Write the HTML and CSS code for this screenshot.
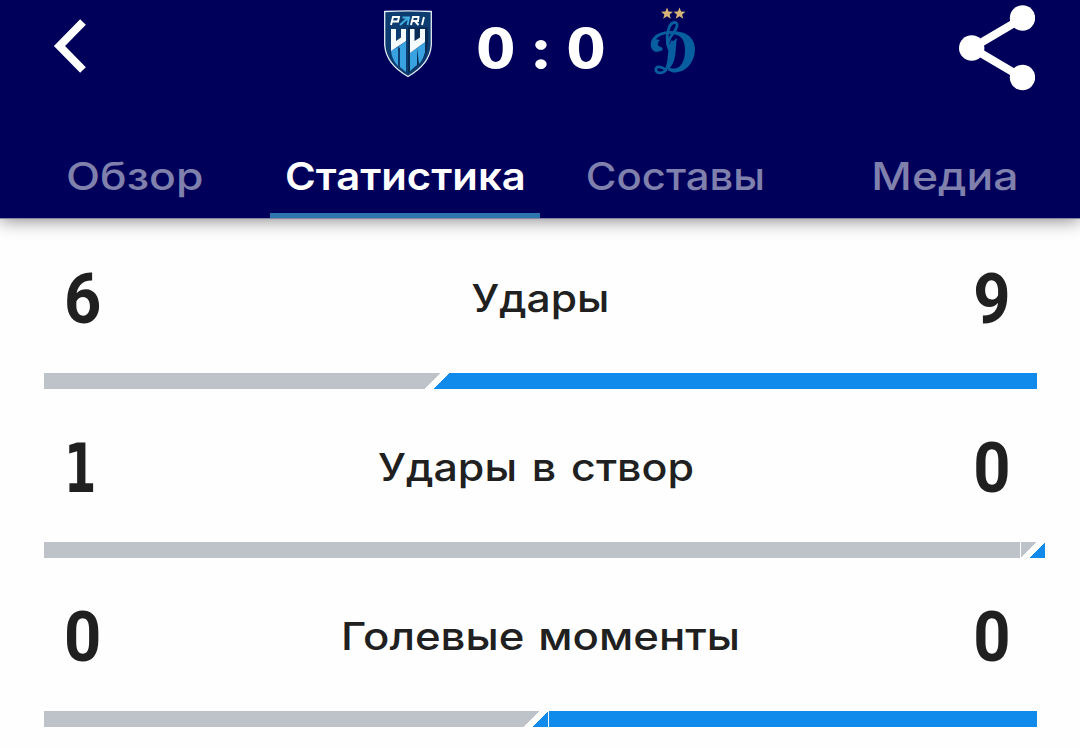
FILE: index.html
```html
<!DOCTYPE html>
<html lang="ru">
<head>
  <meta charset="UTF-8">
  <meta name="viewport" content="width=device-width, initial-scale=1.0">
  <title>Статистика матча</title>
  <link rel="stylesheet" href="styles.css">
</head>
<body>
  <header class="header">
    <div class="top-bar">
      <button class="icon-button" aria-label="Назад">
        <svg class="back-icon" width="36" height="56" viewBox="0 0 36 56">
          <path d="M30 4 L6.500 28 L30 52" fill="none" stroke="#fff" stroke-width="8"/>
        </svg>
      </button>
      <div class="score-board">
        <svg class="team-logo" width="48" height="68" viewBox="0 0 48 68">
          <path d="M.7 1.500 Q24 .2 47.300 1.500 V35 Q46 54 24 66.500 Q2 54 .7 35 Z" fill="#0d3d70" stroke="#e4edf5" stroke-width="1.300"/>
          <path d="M24 17 H44 V35 Q42 52 24 63 Z" fill="#092c56"/>
          <path d="M7 41 L14 37 V56 Q8 50 7 41 Z M14 37 L22 31 V62 L16 57 V38 Z M26 43 L33 38 V55 L26 61 Z M33 38 L41 32 V42 Q39 50 35 54 Z" fill="#39a2e0"/>
          <path d="M7 19 H12 V31 L17 27.500 V19 H22 V31 L7 41 Z M26 19 H30.500 V31 L36 27.500 V19 H41 V32 L26 43 Z" fill="#f5fafc"/>
          <g fill="none" stroke-width="1.900">
            <path d="M7 15 L9 7 H15 L14 11.500 H8.500 M27 15 L29 7 H34.500 L34 11 H28.500 M31 11 L34.500 15 M38 15 L40 7" stroke="#fff"/>
            <path d="M16 15 L25 7 M18.500 7.500 H25 L23.500 15" stroke="#43b0e4"/>
          </g>
        </svg>
        <div class="score">0&nbsp;:&nbsp;0</div>
        <svg class="team-logo" width="46" height="68" viewBox="0 0 46 68">
          <path id="star" d="M17 -2.500 L18.600 1.600 L23 1.800 L19.600 4.500 L20.800 8.700 L17 6.300 L13.200 8.700 L14.400 4.500 L11 1.800 L15.400 1.600 Z" fill="#d6b577"/>
          <use href="#star" x="12.500"/>
          <g fill="none" stroke="#085f9f" stroke-linecap="round">
            <path d="M11 39 C3 43 0 35 4.500 28.500 C10 22 20 22 27 23" stroke-width="3.200"/>
            <path d="M16 60 C11 56 6 56 6 59 C5 64 13 64 16 60" stroke-width="2.800"/>
            <path d="M19 39 C16 32 17 23 19 18 C21 11 28 11 27 16 C25 24 18 26 18 35 C19 38 21 36 22 32" stroke-width="2.800"/>
          </g>
          <path d="M26 21.500 C38 22 45 29 45 40 C44 54 35 63 23 62.500 L17 60 L20 58 C31 61 35 51 35 40 C35 31 32 26 25 24.500 Z M22 32 L27 28 C25 40 27 51 19 59 L15 59 C19 50 17 41 20 34 Z M10 30 C7 33 7 36 11 37 C13 38 13 40 10 41 C3 42 1 34 5 29 Z" fill="#085f9f"/>
        </svg>
      </div>
      <button class="icon-button" aria-label="Поделиться">
        <svg class="share-icon" width="76" height="86" viewBox="0 0 76 86">
          <path d="M64 13 L13 43 L64 73" fill="none" stroke="#fff" stroke-width="8"/>
          <circle cx="63.500" cy="13" r="12.700" fill="#fff"/>
          <circle cx="12.700" cy="43" r="12.700" fill="#fff"/>
          <circle cx="63.500" cy="72.500" r="12.700" fill="#fff"/>
        </svg>
      </button>
    </div>
    <nav class="tabs">
      <a class="tab"><span class="tab-text wide">Обзор</span></a>
      <a class="tab active"><span class="tab-text">Статистика</span></a>
      <a class="tab"><span class="tab-text">Составы</span></a>
      <a class="tab"><span class="tab-text wide">Медиа</span></a>
    </nav>
  </header>

  <main class="stats">
    <section class="stat">
      <div class="stat-row">
        <span class="value">6</span>
        <span class="label">Удары</span>
        <span class="value right">9</span>
      </div>
      <div class="bar">
        <div class="home" style="width: 381px"></div>
        <div class="slash"></div>
        <div class="away"></div>
      </div>
    </section>
    <section class="stat">
      <div class="stat-row">
        <span class="value one">1</span>
        <span class="label on-target">Удары в створ</span>
        <span class="value right">0</span>
      </div>
      <div class="bar">
        <div class="home seam" style="width: 977px"></div>
        <div class="slash"></div>
      </div>
    </section>
    <section class="stat">
      <div class="stat-row">
        <span class="value">0</span>
        <span class="label chances">Голевые моменты</span>
        <span class="value right">0</span>
      </div>
      <div class="bar">
        <div class="home" style="width: 480px"></div>
        <div class="slash"></div>
        <div class="away seam"></div>
      </div>
    </section>
  </main>
</body>
</html>
```
FILE: styles.css
```css
* {
  box-sizing: border-box;
}

body {
  margin: 0;
  font-family: Inter, "Noto Sans", sans-serif;
  background: #fefefe;
  color: #202020;
  overflow: hidden;
}

.header {
  height: 219px;
  background: #00005a;
  border-bottom: 1px solid #8585a8;
  box-shadow: 0 2px 16px rgba(0, 0, 0, 0.45);
}

.top-bar {
  display: flex;
  justify-content: space-between;
  height: 136px;
  padding: 5px 45px 0 53px;
}

.icon-button {
  display: block;
  width: 76px;
  height: 86px;
  padding: 0;
  border: none;
  background: none;
  text-align: left;
}

.icon-button svg {
  display: block;
}

.back-icon {
  margin-top: -5px;
}

.score-board {
  display: flex;
  align-items: flex-start;
  width: 312px;
  justify-content: space-between;
  padding-top: 5px;
  margin-left: -9px;
}

.team-logo {
  overflow: visible;
}

.score {
  color: #fff;
  font-family: Lato, sans-serif;
  font-size: 56px;
  font-weight: 800;
  line-height: 76px;
  word-spacing: 3px;
  transform: scaleX(1.14);
}

.tabs {
  display: grid;
  grid-template-columns: repeat(4, 1fr);
  height: 82px;
}

.tab {
  display: flex;
  justify-content: center;
  height: 82px;
  color: #8080ad;
  font-size: 38px;
  font-weight: 500;
  line-height: 80px;
}

.tab-text {
  transform: scaleX(1.1);
}

.tab-text.wide {
  transform: scaleX(1.17);
}

.tab.active {
  color: #fff;
  font-weight: 600;
  border-bottom: 5px solid #2f75ad;
}

.stats {
  padding: 29px 43px 0 44px;
}

.stat {
  height: 169px;
}

.stat-row {
  display: grid;
  grid-template-columns: 60px 1fr 60px;
  height: 125px;
  padding: 0 20px;
}

.value {
  font-family: Roboto, sans-serif;
  font-size: 70px;
  font-weight: 700;
  line-height: 103px;
  transform: scaleX(0.93);
  transform-origin: left;
}

.value.right {
  padding-right: 7px;
  text-align: right;
  transform-origin: right;
}

.value.one {
  font-family: "DejaVu Sans Condensed", "DejaVu Sans", sans-serif;
  font-size: 67px;
  line-height: 105px;
  transform: scaleX(0.77);
}

.label {
  font-size: 38px;
  font-weight: 500;
  line-height: 101px;
  text-align: center;
  transform: scaleX(1.12);
}

.on-target {
  margin-left: -9px;
  word-spacing: 3px;
  transform: scaleX(1.13);
}

.chances {
  word-spacing: 2px;
  transform: scaleX(1.15);
}

.bar {
  display: flex;
  height: 16px;
}

.home {
  flex-shrink: 0;
  background: #bec3ca;
}

.slash {
  flex: 0 0 24px;
  background: linear-gradient(135deg, #bec3ca 0 11.300px, #fefefe 11.300px 17px, #108aeb 17px);
}

.away {
  flex: 1;
  background: #108aeb;
}

.home.seam {
  border-right: 1px solid #fefefe;
}

.away.seam {
  border-left: 1px solid #fefefe;
}
```
